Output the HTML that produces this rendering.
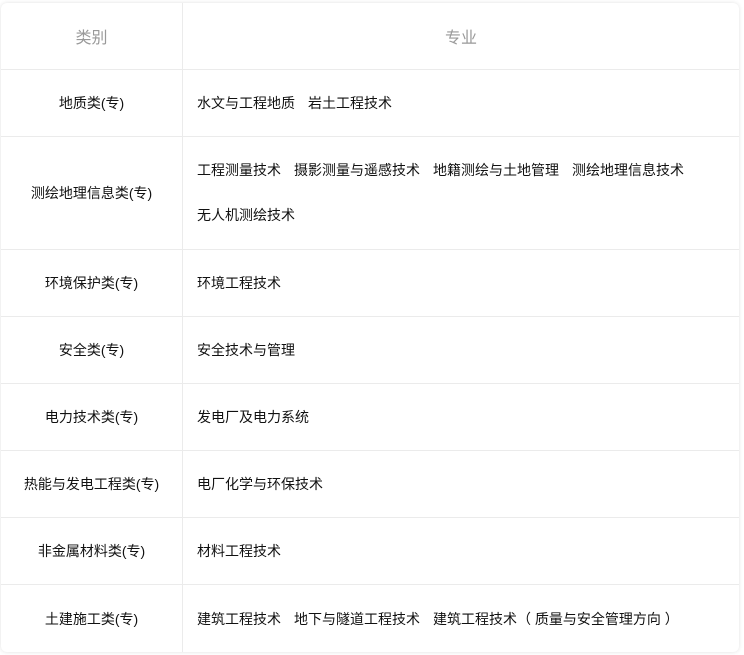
<!DOCTYPE html>
<html><head><meta charset="utf-8"><style>
body{margin:0;width:744px;height:655px;background:#fff;font-family:"Liberation Sans","Noto Sans CJK SC",sans-serif;font-size:14px;color:#111;overflow:hidden}
.card{position:absolute;left:1px;top:3px;width:738px;height:649px;border-radius:6px;box-shadow:0 0 4px rgba(0,0,0,.12);overflow:hidden;background:#fff}
.row{position:absolute;left:0;width:738px;border-bottom:1px solid #ebebeb}
.c1{position:absolute;left:0;top:0;bottom:0;width:181px;border-right:1px solid #ebebeb;display:flex;align-items:center;justify-content:center}
.c2{position:absolute;left:196px;top:0;bottom:0;right:0;display:flex;flex-direction:column;justify-content:center}
.h{color:#999;font-size:16px}
.c2 div{line-height:45px}
i{font-style:normal;display:inline-block;width:13px}
</style></head><body><div class="card">
<div class="row" style="top:0;height:66px"><div class="c1 h">类别</div><div class="c2 h" style="left:182px;align-items:center">专业</div></div>
<div class="row" style="top:67px;height:66px"><div class="c1">地质类(专)</div><div class="c2"><span>水文与工程地质<i></i>岩土工程技术</span></div></div>
<div class="row" style="top:134px;height:112px"><div class="c1">测绘地理信息类(专)</div><div class="c2"><div>工程测量技术<i></i>摄影测量与遥感技术<i></i>地籍测绘与土地管理<i></i>测绘地理信息技术</div><div>无人机测绘技术</div></div></div>
<div class="row" style="top:247px;height:66px"><div class="c1">环境保护类(专)</div><div class="c2"><span>环境工程技术</span></div></div>
<div class="row" style="top:314px;height:66px"><div class="c1">安全类(专)</div><div class="c2"><span>安全技术与管理</span></div></div>
<div class="row" style="top:381px;height:66px"><div class="c1">电力技术类(专)</div><div class="c2"><span>发电厂及电力系统</span></div></div>
<div class="row" style="top:448px;height:66px"><div class="c1">热能与发电工程类(专)</div><div class="c2"><span>电厂化学与环保技术</span></div></div>
<div class="row" style="top:515px;height:66px"><div class="c1">非金属材料类(专)</div><div class="c2"><span>材料工程技术</span></div></div>
<div class="row" style="top:582px;height:67px;border-bottom:none"><div class="c1">土建施工类(专)</div><div class="c2"><span>建筑工程技术<i></i>地下与隧道工程技术<i></i>建筑工程技术（&nbsp;质量与安全管理方向&nbsp;）</span></div></div>
</div></body></html>
